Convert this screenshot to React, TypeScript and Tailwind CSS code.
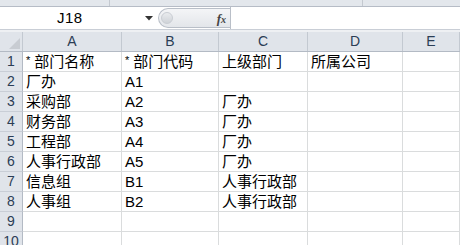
const columns = [
  { label: "A", width: "w-[99px]" },
  { label: "B", width: "w-[97px]" },
  { label: "C", width: "w-[89px]" },
  { label: "D", width: "w-[95px]" },
  { label: "E", width: "w-[57px]" },
];

const rows: string[][] = [
  ["* 部门名称", "* 部门代码", "上级部门", "所属公司", ""],
  ["厂办", "A1", "", "", ""],
  ["采购部", "A2", "厂办", "", ""],
  ["财务部", "A3", "厂办", "", ""],
  ["工程部", "A4", "厂办", "", ""],
  ["人事行政部", "A5", "厂办", "", ""],
  ["信息组", "B1", "人事行政部", "", ""],
  ["人事组", "B2", "人事行政部", "", ""],
  ["", "", "", "", ""],
  ["", "", "", "", ""],
];

function Cell({ text, width }: { text: string; width: string }) {
  const star = text.startsWith("* ");
  return (
    <div
      className={`${width} h-[20px] shrink-0 border-r border-b border-[#dadcdd] flex items-center pl-[3px] text-[15px] leading-none text-black whitespace-nowrap overflow-hidden`}
    >
      {star ? (
        <>
          <span className="text-[11px] mr-[4px] -mt-[3px]">*</span>
          {text.slice(2)}
        </>
      ) : (
        text
      )}
    </div>
  );
}

export default function App() {
  return (
    <div
      className="w-[460px] h-[245px] overflow-hidden bg-white"
      style={{ fontFamily: '"Liberation Sans", "Noto Sans CJK SC", sans-serif' }}
    >
      {/* ribbon remnant */}
      <div className="h-[7px] bg-[#e3e7ec] border-b border-[#b6bcc6] flex">
        <div className="w-[110px] border-r border-[#c4c9d0]" />
        <div className="w-[253px] border-r border-[#c4c9d0]" />
      </div>

      {/* formula bar */}
      <div className="h-[23px] flex bg-white border-b border-[#c9ced6]">
        <div className="w-[158px] flex items-center relative">
          <span className="ml-[57px] text-[15px] text-black tracking-[0.5px]">J18</span>
          <svg className="absolute left-[145px] top-[9px]" width="8" height="5" viewBox="0 0 8 5">
            <path d="M0 0 L8 0 L4 4.5 Z" fill="#333" />
          </svg>
        </div>
        <div className="w-[72px] my-[1px] rounded-l-full border border-r-0 border-[#b9bfc8] bg-gradient-to-b from-[#f4f5f7] to-[#e3e6ea] flex items-center justify-between pr-[4px]">
          <div className="ml-[2px] w-[12px] h-[12px] rounded-full border border-[#c9cdd3] bg-gradient-to-b from-[#e9ebee] to-[#cfd3d8]" />
          <span
            className="text-[13px] italic font-bold text-[#444] leading-none"
            style={{ fontFamily: '"Liberation Serif", serif' }}
          >
            f<span className="text-[10px]">x</span>
          </span>
        </div>
        <div className="flex-1 border-l border-[#b9bfc8] bg-white" />
      </div>

      <div className="h-[2px] bg-[#eef0f3]" />

      {/* column headers */}
      <div className="flex h-[20px] bg-[#e0e4ea] border-b border-[#b3bac4]">
        <div className="w-[23px] shrink-0 border-r border-[#c3c9d1] relative">
          <svg className="absolute right-[2px] bottom-[2px]" width="11" height="11" viewBox="0 0 11 11">
            <path d="M11 0 L11 11 L0 11 Z" fill="#c8ccd2" />
          </svg>
        </div>
        {columns.map((c) => (
          <div
            key={c.label}
            className={`${c.width} shrink-0 border-r border-[#c3c9d1] flex items-center justify-center text-[14px] text-[#2b3d55]`}
          >
            {c.label}
          </div>
        ))}
      </div>

      {/* rows */}
      {rows.map((r, i) => (
        <div key={i} className="flex">
          <div className="w-[23px] h-[20px] shrink-0 bg-[#e0e4ea] border-r border-[#b3bac4] border-b border-b-[#c9ced6] flex items-center justify-center text-[14px] text-[#2b3d55]">
            {i + 1}
          </div>
          {r.map((t, j) => (
            <Cell key={j} text={t} width={columns[j].width} />
          ))}
        </div>
      ))}
    </div>
  );
}
